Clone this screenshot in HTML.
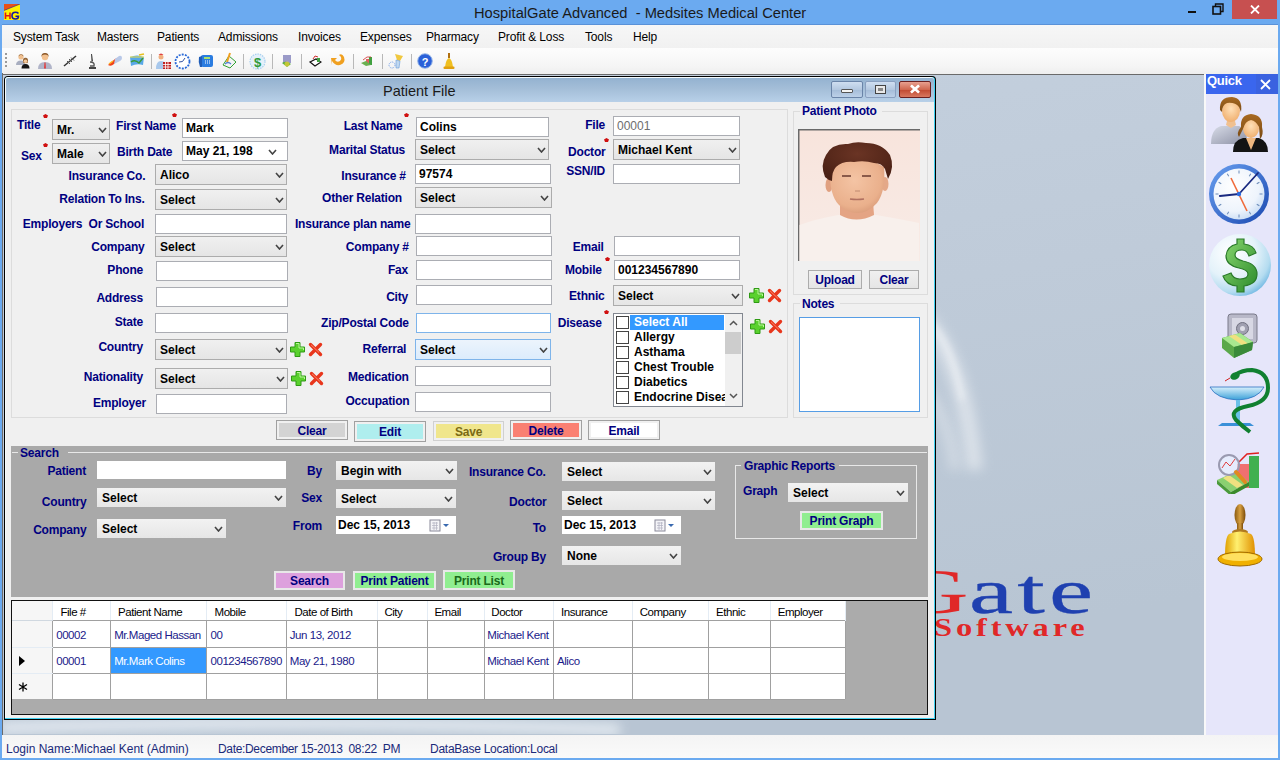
<!DOCTYPE html><html><head><meta charset="utf-8"><style>
html,body{margin:0;padding:0;}body{width:1280px;height:760px;position:relative;overflow:hidden;background:#6baaf0;font-family:"Liberation Sans",sans-serif;}
div,svg{position:absolute;}
</style></head><body>
<svg style="left:4px;top:4px" width="16" height="16" viewBox="0 0 16 16"><rect width="16" height="16" fill="#fff200"/><path d="M0 0H16L0 6.5Z" fill="#e8501a"/><path d="M0 6.5L16 0" stroke="#1a1aa0" stroke-width="0.6"/><path d="M1.5 8.5v6.5M1.5 11.8h4.5M6 8.5v6.5" stroke="#e01818" stroke-width="1.6" fill="none"/><path d="M14.5 9.5 Q13.5 8.3 11.5 8.3 Q8 8.3 8 11.7 Q8 15 11.5 15 Q14.5 15 14.5 12.3 h-3" stroke="#1818a0" stroke-width="1.6" fill="none"/></svg>
<div style="position:absolute;left:474px;top:3.76px;line-height:18px;font-size:14.7px;font-weight:normal;color:#1a1a1a;white-space:pre;">HospitalGate Advanced  - Medsites Medical Center</div>
<div style="position:absolute;left:1188px;top:11px;width:8px;height:2px;background:#111;"></div>
<svg style="left:1212px;top:3px" width="12" height="12" viewBox="0 0 12 12"><rect x="1" y="3.5" width="7.5" height="7.5" fill="none" stroke="#111" stroke-width="1.6"/><path d="M3.5 3.5V1H11V8.5H8.5" fill="none" stroke="#111" stroke-width="1.4"/></svg>
<div style="position:absolute;left:1232px;top:0px;width:45px;height:19px;background:#c75050;"></div>
<svg style="left:1250px;top:5px" width="10" height="9" viewBox="0 0 10 9"><path d="M1 0.5L9 8.5M9 0.5L1 8.5" stroke="#fff" stroke-width="1.8"/></svg>
<div style="position:absolute;left:2px;top:24px;width:1276px;height:1px;background:#5a92d8;"></div>
<div style="position:absolute;left:2px;top:25px;width:1276px;height:23px;background:linear-gradient(#f7f7f7,#f1f1f1);"></div>
<div style="position:absolute;left:13px;top:29.72px;line-height:14px;font-size:12px;font-weight:normal;color:#000;white-space:pre;letter-spacing:-0.15px;">System Task</div>
<div style="position:absolute;left:97px;top:29.72px;line-height:14px;font-size:12px;font-weight:normal;color:#000;white-space:pre;letter-spacing:-0.15px;">Masters</div>
<div style="position:absolute;left:157px;top:29.72px;line-height:14px;font-size:12px;font-weight:normal;color:#000;white-space:pre;letter-spacing:-0.15px;">Patients</div>
<div style="position:absolute;left:218px;top:29.72px;line-height:14px;font-size:12px;font-weight:normal;color:#000;white-space:pre;letter-spacing:-0.15px;">Admissions</div>
<div style="position:absolute;left:298px;top:29.72px;line-height:14px;font-size:12px;font-weight:normal;color:#000;white-space:pre;letter-spacing:-0.15px;">Invoices</div>
<div style="position:absolute;left:360px;top:29.72px;line-height:14px;font-size:12px;font-weight:normal;color:#000;white-space:pre;letter-spacing:-0.15px;">Expenses</div>
<div style="position:absolute;left:426px;top:29.72px;line-height:14px;font-size:12px;font-weight:normal;color:#000;white-space:pre;letter-spacing:-0.15px;">Pharmacy</div>
<div style="position:absolute;left:498px;top:29.72px;line-height:14px;font-size:12px;font-weight:normal;color:#000;white-space:pre;letter-spacing:-0.15px;">Profit &amp; Loss</div>
<div style="position:absolute;left:585px;top:29.72px;line-height:14px;font-size:12px;font-weight:normal;color:#000;white-space:pre;letter-spacing:-0.15px;">Tools</div>
<div style="position:absolute;left:633px;top:29.72px;line-height:14px;font-size:12px;font-weight:normal;color:#000;white-space:pre;letter-spacing:-0.15px;">Help</div>
<div style="position:absolute;left:2px;top:48px;width:1276px;height:26px;background:linear-gradient(#fdfdfd,#f5f5f5 70%,#eeeeee);"></div>
<div style="position:absolute;left:5px;top:53px;width:2px;height:2px;background:#9a9a9a;"></div>
<div style="position:absolute;left:5px;top:57px;width:2px;height:2px;background:#9a9a9a;"></div>
<div style="position:absolute;left:5px;top:61px;width:2px;height:2px;background:#9a9a9a;"></div>
<div style="position:absolute;left:5px;top:65px;width:2px;height:2px;background:#9a9a9a;"></div>
<svg style="left:15px;top:53px" width="16" height="16" viewBox="0 0 16 16"><circle cx="6" cy="4" r="2.6" fill="#f0c090"/><path d="M3.5 3.5 Q6 0 8.5 3.5 L8 2 Q6 0.5 4 2Z" fill="#8a5a2a"/><path d="M1 12 Q1 7.5 6 7.5 Q9 7.5 10 9 L10 12Z" fill="#a8aec0"/><circle cx="10.5" cy="8" r="2.5" fill="#f0c090"/><path d="M8 8 Q8 4.5 10.5 4.8 Q13 4.5 13 8 L12.5 10 L8.5 10Z" fill="#8a5a2a" opacity="0.9"/><circle cx="10.5" cy="8.3" r="1.8" fill="#f3c89a"/><path d="M6.5 15.5 Q6.5 11 10.5 11 Q14.5 11 14.5 15.5Z" fill="#151515"/></svg>
<svg style="left:37px;top:52px" width="16" height="18" viewBox="0 0 16 18"><circle cx="8" cy="5" r="3.2" fill="#f2c08e"/><path d="M4.5 5 Q4 1 8 1 Q12 1 11.5 5 L10.5 3 Q8 2 5.5 3Z" fill="#8a5526"/><path d="M1 17 Q1 10 8 10 Q15 10 15 17Z" fill="#b0b4c8"/><path d="M7.4 10.5h1.2l0.4 6h-2z" fill="#e04040"/></svg>
<svg style="left:63px;top:55px" width="14" height="12" viewBox="0 0 14 12"><path d="M1 11 L13 1" stroke="#333" stroke-width="1.5"/><path d="M4 6 L7 9 M6 4 L9 7 M8 2.5 L11 5.5" stroke="#555" stroke-width="1"/></svg>
<svg style="left:88px;top:53px" width="9" height="17" viewBox="0 0 9 17"><path d="M3 1 L4 1 L5 8 L3.5 9Z" fill="#444"/><path d="M2 9 Q7 9 6 13 L2 13" fill="none" stroke="#555" stroke-width="1.4"/><path d="M1 15h7" stroke="#444" stroke-width="2"/></svg>
<svg style="left:106px;top:55px" width="17" height="12" viewBox="0 0 17 12"><path d="M2 10 L9 4 Q11 2.5 13 4 L8 9 Q5 12 2 10Z" fill="#f0401a"/><path d="M9 4 L13 1 Q16 0 16 3 Q16 5 14 6 L8 9Z" fill="#b8c8e8"/><path d="M3 9 L7 6" stroke="#ffb020" stroke-width="1.5"/></svg>
<svg style="left:129px;top:53px" width="16" height="16" viewBox="0 0 16 16"><path d="M1 4 Q8 1 15 4 L14 12 Q8 10 2 13Z" fill="#58a8e8"/><path d="M2 9 Q6 6 10 10 L14 5" stroke="#3a9a3a" stroke-width="1.5" fill="none"/><path d="M10 2 L15 1" stroke="#e8c020" stroke-width="1.6"/><path d="M1 4 L15 4" stroke="#f0e040" stroke-width="1"/></svg>
<div style="position:absolute;left:151px;top:54px;width:1px;height:15px;background:#b8b8b8;"></div>
<svg style="left:155px;top:52px" width="16" height="18" viewBox="0 0 16 18"><circle cx="6" cy="5" r="2.5" fill="#f0b080"/><path d="M3.5 3 Q6 0 8.5 3Z" fill="#e04040"/><path d="M1 17 Q1 9 6 9 Q9 9 10 11 L10 17Z" fill="#a8c8ec"/><rect x="8" y="10" width="8" height="7" fill="#c02020"/><path d="M8 12.5h8M8 15h8M10.5 10v7M13 10v7" stroke="#fff" stroke-width="0.8"/></svg>
<svg style="left:174px;top:53px" width="17" height="17" viewBox="0 0 17 17"><circle cx="8.5" cy="8.5" r="7" fill="#fff" stroke="#2a6ad8" stroke-width="1.8" stroke-dasharray="2 1.2"/><path d="M8.5 8.5 L5 9 M8.5 8.5 L11 5" stroke="#3050a0" stroke-width="1"/></svg>
<svg style="left:198px;top:54px" width="16" height="14" viewBox="0 0 16 14"><rect x="3" y="1" width="12" height="12" rx="2" fill="#2a7ce0"/><path d="M1 3 Q0 8 2 13 L4 13 L4 2Z" fill="#1f5db8"/><rect x="6" y="3" width="6" height="2" fill="#a8e070"/><path d="M7 7h1M9 7h1M11 7h1M7 9h1M9 9h1M11 9h1" stroke="#fff" stroke-width="1.2"/></svg>
<svg style="left:221px;top:52px" width="16" height="17" viewBox="0 0 16 17"><path d="M2 13 L8 4 L15 10 L9 16Z" fill="#f4f4f4" stroke="#30a030" stroke-width="1"/><path d="M9 1 L6 10" stroke="#f0a020" stroke-width="2"/><path d="M4 12 Q7 9 10 12" stroke="#5080d0" stroke-width="1.2" fill="none"/></svg>
<div style="position:absolute;left:243px;top:54px;width:1px;height:15px;background:#b8b8b8;"></div>
<svg style="left:249px;top:53px" width="17" height="17" viewBox="0 0 17 17"><circle cx="8.5" cy="8.5" r="7.5" fill="#e4f0fa" stroke="#a8d0f0" stroke-width="1.2" stroke-dasharray="1.5 1"/><text x="8.5" y="14" text-anchor="middle" font-family="Liberation Sans" font-weight="bold" font-size="13" fill="#2f9a3a">$</text></svg>
<div style="position:absolute;left:272px;top:54px;width:1px;height:15px;background:#b8b8b8;"></div>
<svg style="left:281px;top:54px" width="11" height="14" viewBox="0 0 11 14"><rect x="2" y="1" width="8" height="8" fill="#9a9ac8"/><path d="M1 9 Q5 6 10 10 L6 13Z" fill="#5ab040"/><circle cx="6" cy="10" r="2.5" fill="#f0d030" opacity="0.7"/></svg>
<div style="position:absolute;left:301px;top:54px;width:1px;height:15px;background:#b8b8b8;"></div>
<svg style="left:309px;top:54px" width="13" height="13" viewBox="0 0 13 13"><path d="M1 8 L7 5 L12 8 L6 12Z" fill="#fff" stroke="#111" stroke-width="1.2"/><path d="M4 5 L6 2 L9 3" stroke="#d03030" stroke-width="1" fill="none"/><rect x="8" y="4" width="3" height="4" fill="#40a040"/></svg>
<svg style="left:330px;top:53px" width="17" height="15" viewBox="0 0 17 15"><path d="M2 8 Q5 13 10 12 Q16 10 14 4 Q12 0 9 2 Q13 5 10 8 Q7 10 5 7 L7 5 L1 5 L2 12Z" fill="#f0a020"/></svg>
<div style="position:absolute;left:353px;top:54px;width:1px;height:15px;background:#b8b8b8;"></div>
<svg style="left:361px;top:55px" width="12" height="11" viewBox="0 0 12 11"><rect x="8" y="2" width="3" height="8" fill="#40a040"/><rect x="5" y="4" width="3" height="6" fill="#e06060"/><path d="M0 8 L5 6 L10 10 L5 11Z" fill="#6ab050"/><path d="M2 5 L6 2 L10 2" stroke="#d03030" stroke-width="0.8" fill="none"/></svg>
<div style="position:absolute;left:382px;top:54px;width:1px;height:15px;background:#b8b8b8;"></div>
<svg style="left:388px;top:53px" width="17" height="16" viewBox="0 0 17 16"><path d="M7 1 L15 3 L12 8 L9 7Z" fill="#f0c840"/><path d="M8 7 L12 8 L11 15 L8 15Z" fill="#c0d8f0" stroke="#6a9ad8" stroke-width="0.6"/><circle cx="4" cy="12" r="3" fill="none" stroke="#6a9ae8" stroke-width="1" stroke-dasharray="1 1"/></svg>
<div style="position:absolute;left:411px;top:54px;width:1px;height:15px;background:#b8b8b8;"></div>
<svg style="left:417px;top:53px" width="16" height="16" viewBox="0 0 16 16"><circle cx="8" cy="8" r="7.3" fill="#2a60d8" stroke="#9ab8e8" stroke-width="1"/><text x="8" y="12.5" text-anchor="middle" font-family="Liberation Sans" font-weight="bold" font-size="11" fill="#fff">?</text></svg>
<svg style="left:443px;top:52px" width="12" height="18" viewBox="0 0 12 18"><path d="M5 1h2v5h-2z" fill="#b07010"/><path d="M2 15 Q3 7 6 6 Q9 7 10 15Z" fill="#f0c020"/><rect x="0.5" y="14.5" width="11" height="2.5" rx="1" fill="#e0a010"/></svg>
<div style="position:absolute;left:2px;top:74px;width:1202px;height:2px;background:linear-gradient(#7a7a7a,#3a3a3a);"></div>
<div style="position:absolute;left:2px;top:73px;width:1px;height:662px;background:#6a6a6a;"></div>
<svg style="left:3px;top:75px" width="1201" height="660" viewBox="3 75 1201 660">
<defs><linearGradient id="mdibg" x1="0" y1="0" x2="0.3" y2="1"><stop offset="0" stop-color="#c5d1df"/><stop offset="0.5" stop-color="#bfcbd9"/><stop offset="1" stop-color="#b8c5d3"/></linearGradient>
<filter id="bl1" x="-50%" y="-50%" width="200%" height="200%"><feGaussianBlur stdDeviation="6"/></filter>
<filter id="bl2" x="-50%" y="-50%" width="200%" height="200%"><feGaussianBlur stdDeviation="3"/></filter></defs>
<rect x="3" y="75" width="1201" height="660" fill="url(#mdibg)"/>
<path d="M900 300 Q960 330 975 470" stroke="#ffffff" stroke-width="16" fill="none" opacity="0.45" filter="url(#bl1)"/><path d="M925 390 Q950 420 955 470" stroke="#ffffff" stroke-width="10" fill="none" opacity="0.35" filter="url(#bl1)"/>
<path d="M925 318 Q952 340 962 400" stroke="#ffffff" stroke-width="4" fill="none" opacity="0.55" filter="url(#bl2)"/>
<path d="M0 728 Q300 718 620 730" stroke="#eef3f8" stroke-width="12" fill="none" opacity="0.8" filter="url(#bl1)"/>
</svg>
<svg style="left:936px;top:540px" width="268" height="120" viewBox="936 540 268 120"><text x="897" y="613" font-family="Liberation Serif" font-size="64" fill="#e02828" transform="translate(897,0) scale(1.55,1) translate(-897,0)">G</text><text x="969" y="613" font-family="Liberation Serif" font-size="64" fill="#1f40b0" stroke="#1f40b0" stroke-width="0.3" transform="translate(969,0) scale(1.55,1) translate(-969,0)" textLength="80" lengthAdjust="spacing">ate</text><text x="934" y="636" font-family="Liberation Serif" font-weight="bold" font-size="25" fill="#e02828" transform="translate(934,0) scale(1.3,1) translate(-934,0)" textLength="116" lengthAdjust="spacing">Software</text></svg>
<div style="position:absolute;left:1204px;top:74px;width:2px;height:661px;background:#f8f8f8;"></div>
<div style="position:absolute;left:1206px;top:74px;width:72px;height:661px;background:#e6e6fa;"></div>
<div style="position:absolute;left:1206px;top:74px;width:72px;height:20px;background:#3a66ee;"></div>
<div style="position:absolute;left:1256px;top:74px;width:22px;height:20px;background:#3a62e0;"></div>
<div style="position:absolute;left:1207px;top:73.73px;line-height:14px;font-size:13px;font-weight:bold;color:#fff;white-space:pre;letter-spacing:-0.3px;">Quick</div>
<svg style="left:1260px;top:79px" width="11" height="11" viewBox="0 0 11 11"><path d="M1 1L10 10M10 1L1 10" stroke="#fff" stroke-width="1.8"/></svg>
<svg style="left:1209px;top:95px" width="62" height="58" viewBox="0 0 62 58"><defs><linearGradient id="shirt" x1="0" y1="0" x2="1" y2="1"><stop offset="0" stop-color="#d8dce8"/><stop offset="1" stop-color="#8c90a4"/></linearGradient>
<radialGradient id="skin" cx="0.5" cy="0.4" r="0.6"><stop offset="0" stop-color="#ffe0b8"/><stop offset="1" stop-color="#f0b070"/></radialGradient>
<linearGradient id="hair" x1="0" y1="0" x2="0" y2="1"><stop offset="0" stop-color="#a86a22"/><stop offset="1" stop-color="#7a4a14"/></linearGradient></defs>
<path d="M2 49 Q2 34 12 31 L30 31 Q38 33 38 45 L36 49Z" fill="url(#shirt)"/>
<path d="M17 30 L22 33 L27 30 L26 26 L18 26Z" fill="#f0c090"/>
<ellipse cx="22" cy="16" rx="9" ry="11" fill="url(#skin)"/>
<path d="M11 15 Q10 2 23 2 Q34 3 32 17 L30 12 Q26 7 18 8 Q13 10 13 17Z" fill="url(#hair)"/>
<path d="M24 57 Q24 45 34 43 L50 43 Q59 46 59 57Z" fill="#141414"/>
<path d="M37 43 L42 55 L47 43Z" fill="#f0b880"/>
<ellipse cx="42" cy="33" rx="8" ry="10" fill="url(#skin)"/>
<path d="M30 42 Q27 38 32 32 Q31 20 42 19 Q54 20 53 32 Q55 40 51 44 L50 32 Q47 26 42 25 Q36 26 34 34Z" fill="url(#hair)"/></svg>
<svg style="left:1207px;top:162px" width="64" height="64" viewBox="0 0 64 64"><defs><radialGradient id="cf" cx="0.4" cy="0.35" r="0.7"><stop offset="0" stop-color="#ffffff"/><stop offset="0.7" stop-color="#eef4fc"/><stop offset="1" stop-color="#c8dcf4"/></radialGradient>
<linearGradient id="cr" x1="0" y1="0" x2="1" y2="1"><stop offset="0" stop-color="#6aa0f0"/><stop offset="1" stop-color="#1a48b0"/></linearGradient></defs>
<circle cx="32" cy="32" r="30" fill="url(#cr)"/><circle cx="32" cy="32" r="25.5" fill="url(#cf)"/>
<g stroke="#6a8ab8" stroke-width="1"><path d="M32 8.5 V11.5" transform="rotate(0 32 32)"/><path d="M32 8.5 V11.5" transform="rotate(30 32 32)"/><path d="M32 8.5 V11.5" transform="rotate(60 32 32)"/><path d="M32 8.5 V11.5" transform="rotate(90 32 32)"/><path d="M32 8.5 V11.5" transform="rotate(120 32 32)"/><path d="M32 8.5 V11.5" transform="rotate(150 32 32)"/><path d="M32 8.5 V11.5" transform="rotate(180 32 32)"/><path d="M32 8.5 V11.5" transform="rotate(210 32 32)"/><path d="M32 8.5 V11.5" transform="rotate(240 32 32)"/><path d="M32 8.5 V11.5" transform="rotate(270 32 32)"/><path d="M32 8.5 V11.5" transform="rotate(300 32 32)"/><path d="M32 8.5 V11.5" transform="rotate(330 32 32)"/></g>
<path d="M32 32 L13 34" stroke="#1a2a80" stroke-width="2.2" stroke-linecap="round"/>
<path d="M32 32 L51 11" stroke="#1a2a80" stroke-width="1.8" stroke-linecap="round"/>
<path d="M24 16 L40 49" stroke="#f06a3a" stroke-width="1.6"/>
<circle cx="32" cy="32" r="2.2" fill="#2a6ae0"/></svg>
<svg style="left:1207px;top:233px" width="66" height="66" viewBox="0 0 66 66"><defs><radialGradient id="bub" cx="0.35" cy="0.3" r="0.75"><stop offset="0" stop-color="#ffffff"/><stop offset="0.55" stop-color="#e4f2fa"/><stop offset="0.85" stop-color="#b4dcf0"/><stop offset="1" stop-color="#78bce4"/></radialGradient>
<linearGradient id="dg" x1="0" y1="0" x2="1" y2="1"><stop offset="0" stop-color="#8ad870"/><stop offset="1" stop-color="#2a8a2a"/></linearGradient></defs>
<circle cx="33" cy="32" r="31" fill="url(#bub)"/>
<path d="M30 6 h7 v5 Q47 12 49 20 L42 23 Q40 17 35 17 Q28 17 28 22 Q28 26 36 28 Q50 31 50 41 Q50 51 37 53 v6 h-7 v-6 Q19 52 16 43 L24 40 Q26 46 33 46 Q41 46 41 41 Q41 37 32 35 Q19 32 19 23 Q20 13 30 11Z" fill="url(#dg)" stroke="#2a7a2a" stroke-width="1.2"/></svg>
<svg style="left:1221px;top:312px" width="38" height="48" viewBox="0 0 38 48"><rect x="7" y="2" width="29" height="29" rx="3" fill="#b8b8c8" stroke="#7a7a8a" stroke-width="1"/><rect x="11" y="6" width="21" height="21" fill="#d8d8e4"/><circle cx="21.5" cy="16.5" r="6" fill="#a0a0b0" stroke="#707080"/><circle cx="21.5" cy="16.5" r="2.5" fill="#e0e0e8"/>
<path d="M1 26 L19 21 L32 30 L31 38 L13 46 L1 36Z" fill="#5aa84a"/><path d="M1 26 L19 21 L32 30 L13 35Z" fill="#a8e890"/><path d="M8 24 L14 22.5 L27 31.5 L21 33Z" fill="#f0e080"/><path d="M13 35 L32 30 L31 38 L13 46Z" fill="#3a8a3a"/></svg>
<svg style="left:1208px;top:368px" width="64" height="66" viewBox="0 0 64 66"><defs><linearGradient id="cup" x1="0" y1="0" x2="0" y2="1"><stop offset="0" stop-color="#d8f0fc"/><stop offset="1" stop-color="#3aa0d8"/></linearGradient></defs>
<path d="M2 19 L56 19 Q50 31 30 32 Q8 31 2 19Z" fill="url(#cup)" stroke="#2a70c0" stroke-width="0.8"/>
<path d="M28 32 h4 v24 h-4z" fill="#6ac0e8"/><path d="M10 58 h36 l-4 -3 h-28z" fill="#3a90d8"/>
<path d="M27 7 Q34 2 44 2 Q60 4 60 20 Q60 34 40 38 Q20 42 28 52 Q34 58 42 64" fill="none" stroke="#108030" stroke-width="4"/>
<ellipse cx="27" cy="8" rx="5" ry="3.5" fill="#108030" transform="rotate(-25 27 8)"/><path d="M22 10 L17 13" stroke="#d02020" stroke-width="1"/></svg>
<svg style="left:1215px;top:450px" width="48" height="44" viewBox="0 0 48 44"><rect x="34" y="6" width="10" height="32" fill="#40b050"/><rect x="22" y="14" width="12" height="24" fill="#f07070"/>
<path d="M24 12 L32 4 L44 3" stroke="#e02020" stroke-width="1.5" fill="none"/>
<path d="M2 30 L20 22 L34 32 L16 42Z" fill="#8ad070"/><path d="M2 30 L2 34 L16 46 L16 42Z" fill="#4a9a3a"/><path d="M16 42 L34 32 L34 36 L16 46Z" fill="#3a8a2a"/><path d="M8 28 L14 25 L28 35 L22 38Z" fill="#f0e080"/>
<circle cx="14" cy="15" r="10" fill="rgba(230,240,255,0.6)" stroke="#9a9ab0" stroke-width="2"/><path d="M7 18 L11 12 L15 16 L20 9" stroke="#e04040" stroke-width="1" fill="none"/>
<path d="M21 22 L30 32" stroke="#e08a20" stroke-width="4" stroke-linecap="round"/></svg>
<svg style="left:1217px;top:503px" width="46" height="66" viewBox="0 0 46 66"><defs><linearGradient id="bl" x1="0" y1="0" x2="1" y2="0"><stop offset="0" stop-color="#e0a000"/><stop offset="0.4" stop-color="#fff070"/><stop offset="1" stop-color="#e09000"/></linearGradient>
<linearGradient id="hd" x1="0" y1="0" x2="1" y2="0"><stop offset="0" stop-color="#8a5a10"/><stop offset="0.5" stop-color="#d8a040"/><stop offset="1" stop-color="#7a4a08"/></linearGradient></defs>
<ellipse cx="23" cy="12" rx="5.5" ry="11" fill="url(#hd)"/><rect x="20" y="20" width="6" height="8" fill="url(#hd)"/><ellipse cx="23" cy="29" rx="8" ry="3" fill="#b07a20"/>
<path d="M8 54 Q8 34 12 31 Q23 26 34 31 Q38 34 38 54Z" fill="url(#bl)"/>
<ellipse cx="23" cy="56" rx="22" ry="7" fill="#f0b000" stroke="#a06a00" stroke-width="1"/><ellipse cx="23" cy="54" rx="18" ry="4" fill="#ffe060"/></svg>
<div style="position:absolute;left:4px;top:76px;width:932px;height:644px;background:#000;border-radius:4px 4px 0 0;"></div>
<div style="position:absolute;left:5px;top:77px;width:930px;height:642px;background:#3fd0f0;border-radius:3px 3px 0 0;"></div>
<div style="position:absolute;left:5px;top:77px;width:929px;height:641px;background:#f4fafc;border-radius:3px 3px 0 0;"></div>
<div style="position:absolute;left:6px;top:78px;width:928px;height:640px;background:#f0f0f0;border-radius:2px 2px 0 0;"></div>
<div style="position:absolute;left:6px;top:78px;width:928px;height:24px;background:linear-gradient(#94b2d0 0%,#a4bed8 45%,#b8d0e8 100%);border-radius:2px 2px 0 0;"></div>
<div style="position:absolute;left:383px;top:82.06px;line-height:18px;font-size:14.5px;font-weight:normal;color:#1a1a1a;white-space:pre;">Patient File</div>
<div style="position:absolute;left:831px;top:81px;width:32px;height:17px;background:linear-gradient(#cfdef0,#b4c8e0 50%,#a4bcd8 51%,#bcd0e8);border:1px solid #6a84a8;border-radius:2px;box-sizing:border-box;"></div>
<div style="position:absolute;left:841px;top:89px;width:12px;height:4px;background:#f4f4f4;border:1px solid #555;box-sizing:border-box;border-radius:1px;"></div>
<div style="position:absolute;left:865px;top:81px;width:31px;height:17px;background:linear-gradient(#cfdef0,#b4c8e0 50%,#a4bcd8 51%,#bcd0e8);border:1px solid #8aa0c0;border-radius:2px;box-sizing:border-box;"></div>
<div style="position:absolute;left:875px;top:85px;width:11px;height:9px;background:transparent;border:1.5px solid #444;box-shadow:inset 0 0 0 2px #e8e8e8;box-sizing:border-box;"></div>
<div style="position:absolute;left:878px;top:88px;width:5px;height:3px;background:#888;"></div>
<div style="position:absolute;left:899px;top:81px;width:32px;height:17px;background:linear-gradient(#e8a090,#d06850 50%,#c04830 51%,#d87860);border:1px solid #6a2020;border-radius:2px;box-sizing:border-box;"></div>
<svg style="left:909px;top:84px" width="12" height="10" viewBox="0 0 12 10"><path d="M2 1.5L10 8.5M10 1.5L2 8.5" stroke="#fff" stroke-width="2.6"/><path d="M2 1.5L10 8.5M10 1.5L2 8.5" stroke="#ffffff" stroke-width="1.6"/></svg>
<div style="position:absolute;left:11px;top:109px;width:777px;height:309px;border:1px solid #dcdcdc;box-sizing:border-box;"></div>
<div style="position:absolute;left:793px;top:111px;width:135px;height:184px;border:1px solid #dcdcdc;box-sizing:border-box;"></div>
<div style="position:absolute;left:793px;top:303px;width:135px;height:115px;border:1px solid #dcdcdc;box-sizing:border-box;"></div>
<div style="position:absolute;left:800px;top:104px;width:82px;height:12px;background:#f0f0f0;"></div>
<div style="position:absolute;left:802px;top:103.72px;line-height:14px;font-size:12px;font-weight:bold;color:#000080;white-space:pre;letter-spacing:-0.2px;">Patient Photo</div>
<div style="position:absolute;left:800px;top:296px;width:40px;height:12px;background:#f0f0f0;"></div>
<div style="position:absolute;left:802px;top:296.72px;line-height:14px;font-size:12px;font-weight:bold;color:#000080;white-space:pre;letter-spacing:-0.2px;">Notes</div>
<div style="position:absolute;left:17px;top:117.82px;line-height:14px;font-size:12px;font-weight:bold;color:#000080;white-space:pre;letter-spacing:-0.2px;">Title</div>
<div style="position:absolute;left:21px;top:149.42px;line-height:14px;font-size:12px;font-weight:bold;color:#000080;white-space:pre;letter-spacing:-0.2px;">Sex</div>
<div style="position:absolute;left:116px;top:119.02px;line-height:14px;font-size:12px;font-weight:bold;color:#000080;white-space:pre;letter-spacing:-0.2px;">First Name</div>
<div style="position:absolute;left:117px;top:144.82px;line-height:14px;font-size:12px;font-weight:bold;color:#000080;white-space:pre;letter-spacing:-0.2px;">Birth Date</div>
<div style="position:absolute;right:1134.7px;top:168.92px;line-height:14px;font-size:12px;font-weight:bold;color:#000080;white-space:pre;letter-spacing:-0.2px;">Insurance Co.</div>
<div style="position:absolute;right:1135.4px;top:192.12px;line-height:14px;font-size:12px;font-weight:bold;color:#000080;white-space:pre;letter-spacing:-0.2px;">Relation To Ins.</div>
<div style="position:absolute;right:1135.9px;top:216.92px;line-height:14px;font-size:12px;font-weight:bold;color:#000080;white-space:pre;letter-spacing:-0.2px;">Employers  Or School</div>
<div style="position:absolute;right:1135.5px;top:240.22px;line-height:14px;font-size:12px;font-weight:bold;color:#000080;white-space:pre;letter-spacing:-0.2px;">Company</div>
<div style="position:absolute;right:1137px;top:263.22px;line-height:14px;font-size:12px;font-weight:bold;color:#000080;white-space:pre;letter-spacing:-0.2px;">Phone</div>
<div style="position:absolute;right:1137px;top:291.22px;line-height:14px;font-size:12px;font-weight:bold;color:#000080;white-space:pre;letter-spacing:-0.2px;">Address</div>
<div style="position:absolute;right:1137px;top:315.22px;line-height:14px;font-size:12px;font-weight:bold;color:#000080;white-space:pre;letter-spacing:-0.2px;">State</div>
<div style="position:absolute;right:1137px;top:340.22px;line-height:14px;font-size:12px;font-weight:bold;color:#000080;white-space:pre;letter-spacing:-0.2px;">Country</div>
<div style="position:absolute;right:1137px;top:370.22px;line-height:14px;font-size:12px;font-weight:bold;color:#000080;white-space:pre;letter-spacing:-0.2px;">Nationality</div>
<div style="position:absolute;right:1134px;top:396.22px;line-height:14px;font-size:12px;font-weight:bold;color:#000080;white-space:pre;letter-spacing:-0.2px;">Employer</div>
<div style="position:absolute;right:877.4px;top:118.52px;line-height:14px;font-size:12px;font-weight:bold;color:#000080;white-space:pre;letter-spacing:-0.2px;">Last Name</div>
<div style="position:absolute;right:875px;top:142.92px;line-height:14px;font-size:12px;font-weight:bold;color:#000080;white-space:pre;letter-spacing:-0.2px;">Marital Status</div>
<div style="position:absolute;right:874.2px;top:168.72px;line-height:14px;font-size:12px;font-weight:bold;color:#000080;white-space:pre;letter-spacing:-0.2px;">Insurance #</div>
<div style="position:absolute;right:878px;top:190.92px;line-height:14px;font-size:12px;font-weight:bold;color:#000080;white-space:pre;letter-spacing:-0.2px;">Other Relation</div>
<div style="position:absolute;right:869.5px;top:216.92px;line-height:14px;font-size:12px;font-weight:bold;color:#000080;white-space:pre;letter-spacing:-0.2px;">Insurance plan name</div>
<div style="position:absolute;right:871.25px;top:240.22px;line-height:14px;font-size:12px;font-weight:bold;color:#000080;white-space:pre;letter-spacing:-0.2px;">Company #</div>
<div style="position:absolute;right:872px;top:263.22px;line-height:14px;font-size:12px;font-weight:bold;color:#000080;white-space:pre;letter-spacing:-0.2px;">Fax</div>
<div style="position:absolute;right:872px;top:290.22px;line-height:14px;font-size:12px;font-weight:bold;color:#000080;white-space:pre;letter-spacing:-0.2px;">City</div>
<div style="position:absolute;right:871.25px;top:316.22px;line-height:14px;font-size:12px;font-weight:bold;color:#000080;white-space:pre;letter-spacing:-0.2px;">Zip/Postal Code</div>
<div style="position:absolute;right:873.75px;top:342.22px;line-height:14px;font-size:12px;font-weight:bold;color:#000080;white-space:pre;letter-spacing:-0.2px;">Referral</div>
<div style="position:absolute;right:871.25px;top:370.22px;line-height:14px;font-size:12px;font-weight:bold;color:#000080;white-space:pre;letter-spacing:-0.2px;">Medication</div>
<div style="position:absolute;right:870.5px;top:394.22px;line-height:14px;font-size:12px;font-weight:bold;color:#000080;white-space:pre;letter-spacing:-0.2px;">Occupation</div>
<div style="position:absolute;right:675px;top:118.22px;line-height:14px;font-size:12px;font-weight:bold;color:#000080;white-space:pre;letter-spacing:-0.2px;">File</div>
<div style="position:absolute;right:674.5px;top:145.12px;line-height:14px;font-size:12px;font-weight:bold;color:#000080;white-space:pre;letter-spacing:-0.2px;">Doctor</div>
<div style="position:absolute;right:675px;top:164.22px;line-height:14px;font-size:12px;font-weight:bold;color:#000080;white-space:pre;letter-spacing:-0.2px;">SSN/ID</div>
<div style="position:absolute;right:676.25px;top:240.22px;line-height:14px;font-size:12px;font-weight:bold;color:#000080;white-space:pre;letter-spacing:-0.2px;">Email</div>
<div style="position:absolute;right:678.25px;top:263.22px;line-height:14px;font-size:12px;font-weight:bold;color:#000080;white-space:pre;letter-spacing:-0.2px;">Mobile</div>
<div style="position:absolute;right:675.5px;top:288.97px;line-height:14px;font-size:12px;font-weight:bold;color:#000080;white-space:pre;letter-spacing:-0.2px;">Ethnic</div>
<div style="position:absolute;right:678.25px;top:316.22px;line-height:14px;font-size:12px;font-weight:bold;color:#000080;white-space:pre;letter-spacing:-0.2px;">Disease</div>
<svg style="position:absolute;left:42.5px;top:113.5px" width="5" height="4"><path d="M2.5 0 L5 1.5 L4 4 L1 4 L0 1.5Z" fill="#d01010"/></svg>
<svg style="position:absolute;left:42.5px;top:142.5px" width="5" height="4"><path d="M2.5 0 L5 1.5 L4 4 L1 4 L0 1.5Z" fill="#d01010"/></svg>
<svg style="position:absolute;left:171.5px;top:112.5px" width="5" height="4"><path d="M2.5 0 L5 1.5 L4 4 L1 4 L0 1.5Z" fill="#d01010"/></svg>
<svg style="position:absolute;left:404.0px;top:112.5px" width="5" height="4"><path d="M2.5 0 L5 1.5 L4 4 L1 4 L0 1.5Z" fill="#d01010"/></svg>
<svg style="position:absolute;left:603.9px;top:137.5px" width="5" height="4"><path d="M2.5 0 L5 1.5 L4 4 L1 4 L0 1.5Z" fill="#d01010"/></svg>
<svg style="position:absolute;left:605.0px;top:256.75px" width="5" height="4"><path d="M2.5 0 L5 1.5 L4 4 L1 4 L0 1.5Z" fill="#d01010"/></svg>
<svg style="position:absolute;left:603.5px;top:310px" width="5" height="4"><path d="M2.5 0 L5 1.5 L4 4 L1 4 L0 1.5Z" fill="#d01010"/></svg>
<div style="position:absolute;left:52px;top:119px;width:58px;height:21px;background:linear-gradient(#f0f0f0,#e5e5e5);border:1px solid #acacac;box-sizing:border-box;"></div>
<div style="position:absolute;left:57px;top:122.72px;line-height:14px;font-size:12px;font-weight:bold;color:#000;white-space:pre;">Mr.</div>
<svg style="position:absolute;left:97.5px;top:127.0px" width="9" height="6"><path d="M1 1 L4.5 5 L8 1" fill="none" stroke="#444" stroke-width="1.6"/></svg>
<div style="position:absolute;left:52px;top:143px;width:58px;height:21px;background:linear-gradient(#f0f0f0,#e5e5e5);border:1px solid #acacac;box-sizing:border-box;"></div>
<div style="position:absolute;left:57px;top:146.72px;line-height:14px;font-size:12px;font-weight:bold;color:#000;white-space:pre;">Male</div>
<svg style="position:absolute;left:97.5px;top:151.0px" width="9" height="6"><path d="M1 1 L4.5 5 L8 1" fill="none" stroke="#444" stroke-width="1.6"/></svg>
<div style="position:absolute;left:182px;top:118px;width:106px;height:20px;background:#fff;border:1px solid #abadb3;box-sizing:border-box;"></div>
<div style="position:absolute;left:186px;top:121.22px;line-height:14px;font-size:12px;font-weight:bold;color:#000;white-space:pre;">Mark</div>
<div style="position:absolute;left:182px;top:141px;width:106px;height:20px;background:#fff;border:1px solid #abadb3;box-sizing:border-box;"></div>
<div style="position:absolute;left:186px;top:144.22px;line-height:14px;font-size:12px;font-weight:bold;color:#000;white-space:pre;">May 21, 198</div>
<svg style="position:absolute;left:268px;top:149px" width="9" height="6"><path d="M1 1 L4.5 5 L8 1" fill="none" stroke="#444" stroke-width="1.6"/></svg>
<div style="position:absolute;left:155px;top:164px;width:132px;height:21px;background:linear-gradient(#f0f0f0,#e5e5e5);border:1px solid #acacac;box-sizing:border-box;"></div>
<div style="position:absolute;left:160px;top:167.72px;line-height:14px;font-size:12px;font-weight:bold;color:#000;white-space:pre;">Alico</div>
<svg style="position:absolute;left:274.5px;top:172.0px" width="9" height="6"><path d="M1 1 L4.5 5 L8 1" fill="none" stroke="#444" stroke-width="1.6"/></svg>
<div style="position:absolute;left:155px;top:189px;width:132px;height:21px;background:linear-gradient(#f0f0f0,#e5e5e5);border:1px solid #acacac;box-sizing:border-box;"></div>
<div style="position:absolute;left:160px;top:192.72px;line-height:14px;font-size:12px;font-weight:bold;color:#000;white-space:pre;">Select</div>
<svg style="position:absolute;left:274.5px;top:197.0px" width="9" height="6"><path d="M1 1 L4.5 5 L8 1" fill="none" stroke="#444" stroke-width="1.6"/></svg>
<div style="position:absolute;left:155px;top:214px;width:132px;height:20px;background:#fff;border:1px solid #abadb3;box-sizing:border-box;"></div>
<div style="position:absolute;left:155px;top:236px;width:132px;height:21px;background:linear-gradient(#f0f0f0,#e5e5e5);border:1px solid #acacac;box-sizing:border-box;"></div>
<div style="position:absolute;left:160px;top:239.72px;line-height:14px;font-size:12px;font-weight:bold;color:#000;white-space:pre;">Select</div>
<svg style="position:absolute;left:274.5px;top:244.0px" width="9" height="6"><path d="M1 1 L4.5 5 L8 1" fill="none" stroke="#444" stroke-width="1.6"/></svg>
<div style="position:absolute;left:156px;top:261px;width:132px;height:20px;background:#fff;border:1px solid #abadb3;box-sizing:border-box;"></div>
<div style="position:absolute;left:156px;top:287px;width:132px;height:20px;background:#fff;border:1px solid #abadb3;box-sizing:border-box;"></div>
<div style="position:absolute;left:155px;top:313px;width:133px;height:20px;background:#fff;border:1px solid #abadb3;box-sizing:border-box;"></div>
<div style="position:absolute;left:155px;top:339px;width:132px;height:21px;background:linear-gradient(#f0f0f0,#e5e5e5);border:1px solid #acacac;box-sizing:border-box;"></div>
<div style="position:absolute;left:160px;top:342.72px;line-height:14px;font-size:12px;font-weight:bold;color:#000;white-space:pre;">Select</div>
<svg style="position:absolute;left:274.5px;top:347.0px" width="9" height="6"><path d="M1 1 L4.5 5 L8 1" fill="none" stroke="#444" stroke-width="1.6"/></svg>
<div style="position:absolute;left:155px;top:368px;width:133px;height:21px;background:linear-gradient(#f0f0f0,#e5e5e5);border:1px solid #acacac;box-sizing:border-box;"></div>
<div style="position:absolute;left:160px;top:371.72px;line-height:14px;font-size:12px;font-weight:bold;color:#000;white-space:pre;">Select</div>
<svg style="position:absolute;left:275.5px;top:376.0px" width="9" height="6"><path d="M1 1 L4.5 5 L8 1" fill="none" stroke="#444" stroke-width="1.6"/></svg>
<div style="position:absolute;left:156px;top:394px;width:131px;height:20px;background:#fff;border:1px solid #abadb3;box-sizing:border-box;"></div>
<svg style="position:absolute;left:290px;top:342px" width="15" height="15" viewBox="0 0 15 15"><path d="M5 0.5h5v4.5h4.5v5h-4.5v4.5h-5v-4.5h-4.5v-5h4.5z" fill="#5ad12e" stroke="#2f9a14" stroke-width="1"/><path d="M6 1.5h3v4.5h4.5v2" fill="none" stroke="#b8f59a" stroke-width="1"/></svg>
<svg style="position:absolute;left:308px;top:342px" width="15" height="15" viewBox="0 0 15 15"><path d="M2.5 2.5 L12.5 12.5 M12.5 2.5 L2.5 12.5" stroke="#e8361c" stroke-width="3.4" stroke-linecap="round"/><path d="M3 2.8 L11 10.5" stroke="#ff9a7a" stroke-width="0.8"/></svg>
<svg style="position:absolute;left:291px;top:371px" width="15" height="15" viewBox="0 0 15 15"><path d="M5 0.5h5v4.5h4.5v5h-4.5v4.5h-5v-4.5h-4.5v-5h4.5z" fill="#5ad12e" stroke="#2f9a14" stroke-width="1"/><path d="M6 1.5h3v4.5h4.5v2" fill="none" stroke="#b8f59a" stroke-width="1"/></svg>
<svg style="position:absolute;left:309px;top:371px" width="15" height="15" viewBox="0 0 15 15"><path d="M2.5 2.5 L12.5 12.5 M12.5 2.5 L2.5 12.5" stroke="#e8361c" stroke-width="3.4" stroke-linecap="round"/><path d="M3 2.8 L11 10.5" stroke="#ff9a7a" stroke-width="0.8"/></svg>
<div style="position:absolute;left:416px;top:117px;width:133px;height:20px;background:#fff;border:1px solid #abadb3;box-sizing:border-box;"></div>
<div style="position:absolute;left:420px;top:120.22px;line-height:14px;font-size:12px;font-weight:bold;color:#000;white-space:pre;">Colins</div>
<div style="position:absolute;left:415px;top:139px;width:134px;height:21px;background:linear-gradient(#f0f0f0,#e5e5e5);border:1px solid #acacac;box-sizing:border-box;"></div>
<div style="position:absolute;left:420px;top:142.72px;line-height:14px;font-size:12px;font-weight:bold;color:#000;white-space:pre;">Select</div>
<svg style="position:absolute;left:536.5px;top:147.0px" width="9" height="6"><path d="M1 1 L4.5 5 L8 1" fill="none" stroke="#444" stroke-width="1.6"/></svg>
<div style="position:absolute;left:415px;top:164px;width:136px;height:20px;background:#fff;border:1px solid #abadb3;box-sizing:border-box;"></div>
<div style="position:absolute;left:419px;top:167.22px;line-height:14px;font-size:12px;font-weight:bold;color:#000;white-space:pre;">97574</div>
<div style="position:absolute;left:415px;top:187px;width:137px;height:21px;background:linear-gradient(#f0f0f0,#e5e5e5);border:1px solid #acacac;box-sizing:border-box;"></div>
<div style="position:absolute;left:420px;top:190.72px;line-height:14px;font-size:12px;font-weight:bold;color:#000;white-space:pre;">Select</div>
<svg style="position:absolute;left:539.5px;top:195.0px" width="9" height="6"><path d="M1 1 L4.5 5 L8 1" fill="none" stroke="#444" stroke-width="1.6"/></svg>
<div style="position:absolute;left:415px;top:214px;width:136px;height:20px;background:#fff;border:1px solid #abadb3;box-sizing:border-box;"></div>
<div style="position:absolute;left:416px;top:236px;width:136px;height:20px;background:#fff;border:1px solid #abadb3;box-sizing:border-box;"></div>
<div style="position:absolute;left:416px;top:260px;width:136px;height:20px;background:#fff;border:1px solid #abadb3;box-sizing:border-box;"></div>
<div style="position:absolute;left:416px;top:285px;width:136px;height:20px;background:#fff;border:1px solid #abadb3;box-sizing:border-box;"></div>
<div style="position:absolute;left:416px;top:313px;width:135px;height:20px;background:#fff;border:1px solid #7eb4ea;box-sizing:border-box;"></div>
<div style="position:absolute;left:415px;top:339px;width:136px;height:21px;background:linear-gradient(#ecf4fc,#dcecfc);border:1px solid #7eb4ea;box-sizing:border-box;"></div>
<div style="position:absolute;left:420px;top:342.72px;line-height:14px;font-size:12px;font-weight:bold;color:#000;white-space:pre;">Select</div>
<svg style="position:absolute;left:538.5px;top:347.0px" width="9" height="6"><path d="M1 1 L4.5 5 L8 1" fill="none" stroke="#444" stroke-width="1.6"/></svg>
<div style="position:absolute;left:415px;top:366px;width:136px;height:20px;background:#fff;border:1px solid #abadb3;box-sizing:border-box;"></div>
<div style="position:absolute;left:415px;top:392px;width:136px;height:20px;background:#fff;border:1px solid #abadb3;box-sizing:border-box;"></div>
<div style="position:absolute;left:613px;top:116px;width:127px;height:20px;background:#fff;border:1px solid #abadb3;box-sizing:border-box;"></div>
<div style="position:absolute;left:617px;top:119.22px;line-height:14px;font-size:12px;font-weight:normal;color:#6d6d6d;white-space:pre;">00001</div>
<div style="position:absolute;left:613px;top:139px;width:127px;height:21px;background:linear-gradient(#f0f0f0,#e5e5e5);border:1px solid #acacac;box-sizing:border-box;"></div>
<div style="position:absolute;left:618px;top:142.72px;line-height:14px;font-size:12px;font-weight:bold;color:#000;white-space:pre;">Michael Kent</div>
<svg style="position:absolute;left:727.5px;top:147.0px" width="9" height="6"><path d="M1 1 L4.5 5 L8 1" fill="none" stroke="#444" stroke-width="1.6"/></svg>
<div style="position:absolute;left:613px;top:164px;width:127px;height:20px;background:#fff;border:1px solid #abadb3;box-sizing:border-box;"></div>
<div style="position:absolute;left:614px;top:236px;width:126px;height:20px;background:#fff;border:1px solid #abadb3;box-sizing:border-box;"></div>
<div style="position:absolute;left:614px;top:260px;width:126px;height:20px;background:#fff;border:1px solid #abadb3;box-sizing:border-box;"></div>
<div style="position:absolute;left:618px;top:263.22px;line-height:14px;font-size:12px;font-weight:bold;color:#000;white-space:pre;">001234567890</div>
<div style="position:absolute;left:613px;top:285px;width:130px;height:21px;background:linear-gradient(#f0f0f0,#e5e5e5);border:1px solid #acacac;box-sizing:border-box;"></div>
<div style="position:absolute;left:618px;top:288.72px;line-height:14px;font-size:12px;font-weight:bold;color:#000;white-space:pre;">Select</div>
<svg style="position:absolute;left:730.5px;top:293.0px" width="9" height="6"><path d="M1 1 L4.5 5 L8 1" fill="none" stroke="#444" stroke-width="1.6"/></svg>
<svg style="position:absolute;left:749px;top:288px" width="15" height="15" viewBox="0 0 15 15"><path d="M5 0.5h5v4.5h4.5v5h-4.5v4.5h-5v-4.5h-4.5v-5h4.5z" fill="#5ad12e" stroke="#2f9a14" stroke-width="1"/><path d="M6 1.5h3v4.5h4.5v2" fill="none" stroke="#b8f59a" stroke-width="1"/></svg>
<svg style="position:absolute;left:767px;top:288px" width="15" height="15" viewBox="0 0 15 15"><path d="M2.5 2.5 L12.5 12.5 M12.5 2.5 L2.5 12.5" stroke="#e8361c" stroke-width="3.4" stroke-linecap="round"/><path d="M3 2.8 L11 10.5" stroke="#ff9a7a" stroke-width="0.8"/></svg>
<svg style="position:absolute;left:750px;top:319px" width="15" height="15" viewBox="0 0 15 15"><path d="M5 0.5h5v4.5h4.5v5h-4.5v4.5h-5v-4.5h-4.5v-5h4.5z" fill="#5ad12e" stroke="#2f9a14" stroke-width="1"/><path d="M6 1.5h3v4.5h4.5v2" fill="none" stroke="#b8f59a" stroke-width="1"/></svg>
<svg style="position:absolute;left:768px;top:319px" width="15" height="15" viewBox="0 0 15 15"><path d="M2.5 2.5 L12.5 12.5 M12.5 2.5 L2.5 12.5" stroke="#e8361c" stroke-width="3.4" stroke-linecap="round"/><path d="M3 2.8 L11 10.5" stroke="#ff9a7a" stroke-width="0.8"/></svg>
<div style="position:absolute;left:613px;top:313px;width:130px;height:94px;background:#fff;border:1px solid #828790;box-sizing:border-box;"></div>
<div style="position:absolute;left:630px;top:315px;width:94px;height:15px;background:#3399ff;"></div>
<div style="left:614px;top:314px;width:111px;height:92px;overflow:hidden">
<div style="position:absolute;left:2px;top:2px;width:13px;height:13px;background:#fff;border:1px solid #444;box-sizing:border-box;"></div>
<div style="position:absolute;left:20px;top:1.22px;line-height:14px;font-size:12px;font-weight:bold;color:#fff;white-space:pre;">Select All</div>
<div style="position:absolute;left:2px;top:17px;width:13px;height:13px;background:#fff;border:1px solid #444;box-sizing:border-box;"></div>
<div style="position:absolute;left:20px;top:16.22px;line-height:14px;font-size:12px;font-weight:bold;color:#000;white-space:pre;">Allergy</div>
<div style="position:absolute;left:2px;top:32px;width:13px;height:13px;background:#fff;border:1px solid #444;box-sizing:border-box;"></div>
<div style="position:absolute;left:20px;top:31.22px;line-height:14px;font-size:12px;font-weight:bold;color:#000;white-space:pre;">Asthama</div>
<div style="position:absolute;left:2px;top:47px;width:13px;height:13px;background:#fff;border:1px solid #444;box-sizing:border-box;"></div>
<div style="position:absolute;left:20px;top:46.22px;line-height:14px;font-size:12px;font-weight:bold;color:#000;white-space:pre;">Chest Trouble</div>
<div style="position:absolute;left:2px;top:62px;width:13px;height:13px;background:#fff;border:1px solid #444;box-sizing:border-box;"></div>
<div style="position:absolute;left:20px;top:61.22px;line-height:14px;font-size:12px;font-weight:bold;color:#000;white-space:pre;">Diabetics</div>
<div style="position:absolute;left:2px;top:77px;width:13px;height:13px;background:#fff;border:1px solid #444;box-sizing:border-box;"></div>
<div style="position:absolute;left:20px;top:76.22px;line-height:14px;font-size:12px;font-weight:bold;color:#000;white-space:pre;">Endocrine Diseases</div>
</div>
<div style="position:absolute;left:725px;top:314px;width:17px;height:92px;background:#f0f0f0;"></div>
<div style="position:absolute;left:725px;top:332px;width:16px;height:22px;background:#cdcdcd;"></div>
<svg style="left:729px;top:320px" width="9" height="6"><path d="M1 5 L4.5 1.5 L8 5" fill="none" stroke="#555" stroke-width="1.5"/></svg>
<svg style="left:729px;top:393px" width="9" height="6"><path d="M1 1 L4.5 4.5 L8 1" fill="none" stroke="#555" stroke-width="1.5"/></svg>
<svg style="left:798px;top:129px" width="122" height="132" viewBox="0 0 122 132">
<defs><radialGradient id="fc" cx="0.45" cy="0.4" r="0.65"><stop offset="0" stop-color="#f4c4a4"/><stop offset="0.75" stop-color="#eab08c"/><stop offset="1" stop-color="#d89a78"/></radialGradient>
<radialGradient id="hr" cx="0.5" cy="0.3" r="0.7"><stop offset="0" stop-color="#6a3424"/><stop offset="1" stop-color="#4a2014"/></radialGradient>
<linearGradient id="bgp" x1="0" y1="0" x2="0" y2="1"><stop offset="0" stop-color="#f8e4dc"/><stop offset="1" stop-color="#f8ebe6"/></linearGradient></defs>
<rect width="122" height="132" fill="url(#bgp)"/>
<path d="M0 0 H122 V1.5 H1.5 V132 H0Z" fill="#6a6a6a"/>
<path d="M1.5 132 L1.5 96 Q18 90 40 86 L78 86 Q102 90 121 94 L121 132Z" fill="#f8f0ec"/>
<path d="M42 72 L42 86 Q58 95 76 86 L75 72Z" fill="#e4a484"/>
<ellipse cx="31" cy="56" rx="3.5" ry="7" fill="#e0a080"/><ellipse cx="87" cy="55" rx="3.5" ry="7" fill="#e4a888"/>
<path d="M32 40 Q31 66 41 76 Q50 84 59 84 Q70 84 79 74 Q88 62 86 38 Q72 28 50 30 Q38 32 32 40Z" fill="url(#fc)"/>
<path d="M27 48 Q22 36 28 26 Q34 14 50 15 Q58 12 68 14 Q84 14 92 26 Q97 38 90 50 L87 40 Q84 34 76 34 Q66 31 56 33 Q44 32 38 38 Q34 42 34 52 Q30 51 27 48Z" fill="url(#hr)"/>
<path d="M44 47 h9 M64 47 h9" stroke="#8a5a4a" stroke-width="1.8"/><path d="M57 62 h5" stroke="#c08a70" stroke-width="1"/><path d="M52 70 Q59 71 66 70" stroke="#b07060" stroke-width="1.4" fill="none"/>
</svg>
<div style="position:absolute;left:808px;top:270px;width:54px;height:19px;background:linear-gradient(#f0f0f0,#e5e5e5);border:1px solid #acacac;box-sizing:border-box;"></div>
<div style="position:absolute;left:808px;top:271px;width:54px;height:19px;line-height:19px;text-align:center;font-size:12px;font-weight:bold;color:#000080;letter-spacing:-0.2px;">Upload</div>
<div style="position:absolute;left:869px;top:270px;width:50px;height:19px;background:linear-gradient(#f0f0f0,#e5e5e5);border:1px solid #acacac;box-sizing:border-box;"></div>
<div style="position:absolute;left:869px;top:271px;width:50px;height:19px;line-height:19px;text-align:center;font-size:12px;font-weight:bold;color:#000080;letter-spacing:-0.2px;">Clear</div>
<div style="position:absolute;left:799px;top:317px;width:121px;height:95px;background:#fff;border:1px solid #569de5;box-sizing:border-box;"></div>
<div style="position:absolute;left:276px;top:420px;width:72px;height:20px;background:#d3d3d3;border:1px solid #a0a0a0;box-shadow:inset 0 0 0 2px #f0f0f0;box-sizing:border-box;"></div>
<div style="position:absolute;left:276px;top:421px;width:72px;height:20px;line-height:20px;text-align:center;font-size:12px;font-weight:bold;color:#000080;letter-spacing:-0.2px;">Clear</div>
<div style="position:absolute;left:354px;top:421px;width:72px;height:21px;background:#afeeee;border:1px solid #a0a0a0;box-shadow:inset 0 0 0 2px #f0f0f0;box-sizing:border-box;"></div>
<div style="position:absolute;left:354px;top:422px;width:72px;height:21px;line-height:21px;text-align:center;font-size:12px;font-weight:bold;color:#000080;letter-spacing:-0.2px;">Edit</div>
<div style="position:absolute;left:433px;top:421px;width:71px;height:20px;background:#f0e68c;border:1px solid #d0d0d0;box-shadow:inset 0 0 0 2px #f0f0f0;box-sizing:border-box;"></div>
<div style="position:absolute;left:433px;top:422px;width:71px;height:20px;line-height:20px;text-align:center;font-size:12px;font-weight:bold;color:#7a6a14;letter-spacing:-0.2px;">Save</div>
<div style="position:absolute;left:510px;top:420px;width:72px;height:20px;background:#fa8072;border:1px solid #a0a0a0;box-shadow:inset 0 0 0 2px #f0f0f0;box-sizing:border-box;"></div>
<div style="position:absolute;left:510px;top:421px;width:72px;height:20px;line-height:20px;text-align:center;font-size:12px;font-weight:bold;color:#000080;letter-spacing:-0.2px;">Delete</div>
<div style="position:absolute;left:588px;top:420px;width:72px;height:20px;background:#ffffff;border:1px solid #a0a0a0;box-shadow:inset 0 0 0 2px #f0f0f0;box-sizing:border-box;"></div>
<div style="position:absolute;left:588px;top:421px;width:72px;height:20px;line-height:20px;text-align:center;font-size:12px;font-weight:bold;color:#000080;letter-spacing:-0.2px;">Email</div>
<div style="position:absolute;left:11px;top:446px;width:917px;height:151px;background:#a9a9a9;"></div>
<div style="position:absolute;left:12px;top:452px;width:915px;height:1px;background:#e8e8e8;"></div>
<div style="position:absolute;left:18px;top:447px;width:50px;height:12px;background:#a9a9a9;"></div>
<div style="position:absolute;left:20px;top:446.22px;line-height:14px;font-size:12px;font-weight:bold;color:#000080;white-space:pre;letter-spacing:-0.2px;">Search</div>
<div style="position:absolute;right:1194px;top:463.92px;line-height:14px;font-size:12px;font-weight:bold;color:#000080;white-space:pre;letter-spacing:-0.2px;">Patient</div>
<div style="position:absolute;right:1193.6px;top:495.22px;line-height:14px;font-size:12px;font-weight:bold;color:#000080;white-space:pre;letter-spacing:-0.2px;">Country</div>
<div style="position:absolute;right:1193.6px;top:522.52px;line-height:14px;font-size:12px;font-weight:bold;color:#000080;white-space:pre;letter-spacing:-0.2px;">Company</div>
<div style="position:absolute;right:958px;top:463.52px;line-height:14px;font-size:12px;font-weight:bold;color:#000080;white-space:pre;letter-spacing:-0.2px;">By</div>
<div style="position:absolute;right:958px;top:490.62px;line-height:14px;font-size:12px;font-weight:bold;color:#000080;white-space:pre;letter-spacing:-0.2px;">Sex</div>
<div style="position:absolute;right:958px;top:519.22px;line-height:14px;font-size:12px;font-weight:bold;color:#000080;white-space:pre;letter-spacing:-0.2px;">From</div>
<div style="position:absolute;right:734.3px;top:465.12px;line-height:14px;font-size:12px;font-weight:bold;color:#000080;white-space:pre;letter-spacing:-0.2px;">Insurance Co.</div>
<div style="position:absolute;right:733.5px;top:495.02px;line-height:14px;font-size:12px;font-weight:bold;color:#000080;white-space:pre;letter-spacing:-0.2px;">Doctor</div>
<div style="position:absolute;right:734px;top:520.92px;line-height:14px;font-size:12px;font-weight:bold;color:#000080;white-space:pre;letter-spacing:-0.2px;">To</div>
<div style="position:absolute;right:734px;top:550.02px;line-height:14px;font-size:12px;font-weight:bold;color:#000080;white-space:pre;letter-spacing:-0.2px;">Group By</div>
<div style="position:absolute;left:97px;top:461px;width:189px;height:18px;background:#fff;"></div>
<div style="position:absolute;left:97px;top:488px;width:189px;height:19px;background:linear-gradient(#f2f2f2,#e6e6e6);"></div>
<div style="position:absolute;left:102px;top:490.72px;line-height:14px;font-size:12px;font-weight:bold;color:#000;white-space:pre;">Select</div>
<svg style="position:absolute;left:273.5px;top:495.0px" width="9" height="6"><path d="M1 1 L4.5 5 L8 1" fill="none" stroke="#444" stroke-width="1.6"/></svg>
<div style="position:absolute;left:97px;top:519px;width:129px;height:19px;background:linear-gradient(#f2f2f2,#e6e6e6);"></div>
<div style="position:absolute;left:102px;top:521.72px;line-height:14px;font-size:12px;font-weight:bold;color:#000;white-space:pre;">Select</div>
<svg style="position:absolute;left:213.5px;top:526.0px" width="9" height="6"><path d="M1 1 L4.5 5 L8 1" fill="none" stroke="#444" stroke-width="1.6"/></svg>
<div style="position:absolute;left:336px;top:461px;width:121px;height:19px;background:linear-gradient(#f2f2f2,#e6e6e6);"></div>
<div style="position:absolute;left:341px;top:463.72px;line-height:14px;font-size:12px;font-weight:bold;color:#000;white-space:pre;">Begin with</div>
<svg style="position:absolute;left:444.5px;top:468.0px" width="9" height="6"><path d="M1 1 L4.5 5 L8 1" fill="none" stroke="#444" stroke-width="1.6"/></svg>
<div style="position:absolute;left:336px;top:489px;width:120px;height:19px;background:linear-gradient(#f2f2f2,#e6e6e6);"></div>
<div style="position:absolute;left:341px;top:491.72px;line-height:14px;font-size:12px;font-weight:bold;color:#000;white-space:pre;">Select</div>
<svg style="position:absolute;left:443.5px;top:496.0px" width="9" height="6"><path d="M1 1 L4.5 5 L8 1" fill="none" stroke="#444" stroke-width="1.6"/></svg>
<div style="position:absolute;left:336px;top:516px;width:120px;height:18px;background:#fff;"></div>
<div style="position:absolute;left:338px;top:518.22px;line-height:14px;font-size:12px;font-weight:bold;color:#000;white-space:pre;">Dec 15, 2013</div>
<svg style="left:429px;top:519px" width="22" height="13" viewBox="0 0 22 13"><rect x="1" y="1" width="10" height="11" fill="#f4f4f8" stroke="#8a8a9a" stroke-width="1"/><path d="M3 4h6M3 6.5h6M3 9h6M5 3v8M7.5 3v8" stroke="#b0b0c0" stroke-width="0.7"/><path d="M14 5 L20 5 L17 8Z" fill="#3a6ab0"/></svg>
<div style="position:absolute;left:562px;top:462px;width:153px;height:19px;background:linear-gradient(#f2f2f2,#e6e6e6);"></div>
<div style="position:absolute;left:567px;top:464.72px;line-height:14px;font-size:12px;font-weight:bold;color:#000;white-space:pre;">Select</div>
<svg style="position:absolute;left:702.5px;top:469.0px" width="9" height="6"><path d="M1 1 L4.5 5 L8 1" fill="none" stroke="#444" stroke-width="1.6"/></svg>
<div style="position:absolute;left:562px;top:491px;width:153px;height:19px;background:linear-gradient(#f2f2f2,#e6e6e6);"></div>
<div style="position:absolute;left:567px;top:493.72px;line-height:14px;font-size:12px;font-weight:bold;color:#000;white-space:pre;">Select</div>
<svg style="position:absolute;left:702.5px;top:498.0px" width="9" height="6"><path d="M1 1 L4.5 5 L8 1" fill="none" stroke="#444" stroke-width="1.6"/></svg>
<div style="position:absolute;left:562px;top:516px;width:119px;height:18px;background:#fff;"></div>
<div style="position:absolute;left:564px;top:518.22px;line-height:14px;font-size:12px;font-weight:bold;color:#000;white-space:pre;">Dec 15, 2013</div>
<svg style="left:654px;top:519px" width="22" height="13" viewBox="0 0 22 13"><rect x="1" y="1" width="10" height="11" fill="#f4f4f8" stroke="#8a8a9a" stroke-width="1"/><path d="M3 4h6M3 6.5h6M3 9h6M5 3v8M7.5 3v8" stroke="#b0b0c0" stroke-width="0.7"/><path d="M14 5 L20 5 L17 8Z" fill="#3a6ab0"/></svg>
<div style="position:absolute;left:562px;top:546px;width:119px;height:19px;background:linear-gradient(#f2f2f2,#e6e6e6);"></div>
<div style="position:absolute;left:567px;top:548.72px;line-height:14px;font-size:12px;font-weight:bold;color:#000;white-space:pre;">None</div>
<svg style="position:absolute;left:668.5px;top:553.0px" width="9" height="6"><path d="M1 1 L4.5 5 L8 1" fill="none" stroke="#444" stroke-width="1.6"/></svg>
<div style="position:absolute;left:735px;top:465px;width:182px;height:74px;border:1px solid #e8e8e8;box-sizing:border-box;"></div>
<div style="position:absolute;left:741px;top:459px;width:98px;height:12px;background:#a9a9a9;"></div>
<div style="position:absolute;left:744px;top:459.42px;line-height:14px;font-size:12px;font-weight:bold;color:#000080;white-space:pre;letter-spacing:-0.2px;">Graphic Reports</div>
<div style="position:absolute;left:743px;top:484.12px;line-height:14px;font-size:12px;font-weight:bold;color:#000080;white-space:pre;letter-spacing:-0.2px;">Graph</div>
<div style="position:absolute;left:788px;top:483px;width:120px;height:19px;background:linear-gradient(#f2f2f2,#e6e6e6);"></div>
<div style="position:absolute;left:793px;top:485.72px;line-height:14px;font-size:12px;font-weight:bold;color:#000;white-space:pre;">Select</div>
<svg style="position:absolute;left:895.5px;top:490.0px" width="9" height="6"><path d="M1 1 L4.5 5 L8 1" fill="none" stroke="#444" stroke-width="1.6"/></svg>
<div style="position:absolute;left:800px;top:511px;width:83px;height:19px;background:#90ee90;border:2px solid #e8e8e8;box-sizing:border-box;"></div>
<div style="position:absolute;left:800px;top:512px;width:83px;height:19px;line-height:19px;text-align:center;font-size:12px;font-weight:bold;color:#000080;letter-spacing:-0.2px;">Print Graph</div>
<div style="position:absolute;left:274px;top:571px;width:71px;height:19px;background:#dda0dd;border:2px solid #e8e8e8;box-sizing:border-box;"></div>
<div style="position:absolute;left:274px;top:572px;width:71px;height:19px;line-height:19px;text-align:center;font-size:12px;font-weight:bold;color:#000080;letter-spacing:-0.2px;">Search</div>
<div style="position:absolute;left:353px;top:571px;width:83px;height:19px;background:#90ee90;border:2px solid #e8e8e8;box-sizing:border-box;"></div>
<div style="position:absolute;left:353px;top:572px;width:83px;height:19px;line-height:19px;text-align:center;font-size:12px;font-weight:bold;color:#000080;letter-spacing:-0.2px;">Print Patient</div>
<div style="position:absolute;left:443px;top:570px;width:72px;height:20px;background:#90ee90;border:2px solid #e8e8e8;box-sizing:border-box;"></div>
<div style="position:absolute;left:443px;top:571px;width:72px;height:20px;line-height:20px;text-align:center;font-size:12px;font-weight:bold;color:#1a6a1a;letter-spacing:-0.2px;">Print List</div>
<div style="position:absolute;left:11px;top:600px;width:917px;height:115px;background:#ababab;border:1px solid #111;box-sizing:border-box;"></div>
<div style="position:absolute;left:12px;top:601px;width:833px;height:20px;background:#fff;"></div>
<div style="position:absolute;left:12px;top:601px;width:41px;height:98px;background:#f6f6f6;"></div>
<div style="position:absolute;left:53px;top:621px;width:792px;height:78px;background:#fff;"></div>
<div style="position:absolute;left:111px;top:648px;width:95px;height:25px;background:#3399ff;"></div>
<div style="position:absolute;left:52px;top:621px;width:1px;height:78px;background:#a0a0a0;"></div>
<div style="position:absolute;left:52px;top:601px;width:1px;height:20px;background:#e4ecf4;"></div>
<div style="position:absolute;left:110px;top:621px;width:1px;height:78px;background:#a0a0a0;"></div>
<div style="position:absolute;left:110px;top:601px;width:1px;height:20px;background:#e4ecf4;"></div>
<div style="position:absolute;left:206px;top:621px;width:1px;height:78px;background:#a0a0a0;"></div>
<div style="position:absolute;left:206px;top:601px;width:1px;height:20px;background:#e4ecf4;"></div>
<div style="position:absolute;left:286px;top:621px;width:1px;height:78px;background:#a0a0a0;"></div>
<div style="position:absolute;left:286px;top:601px;width:1px;height:20px;background:#e4ecf4;"></div>
<div style="position:absolute;left:377px;top:621px;width:1px;height:78px;background:#a0a0a0;"></div>
<div style="position:absolute;left:377px;top:601px;width:1px;height:20px;background:#e4ecf4;"></div>
<div style="position:absolute;left:427px;top:621px;width:1px;height:78px;background:#a0a0a0;"></div>
<div style="position:absolute;left:427px;top:601px;width:1px;height:20px;background:#e4ecf4;"></div>
<div style="position:absolute;left:484px;top:621px;width:1px;height:78px;background:#a0a0a0;"></div>
<div style="position:absolute;left:484px;top:601px;width:1px;height:20px;background:#e4ecf4;"></div>
<div style="position:absolute;left:553px;top:621px;width:1px;height:78px;background:#a0a0a0;"></div>
<div style="position:absolute;left:553px;top:601px;width:1px;height:20px;background:#e4ecf4;"></div>
<div style="position:absolute;left:632px;top:621px;width:1px;height:78px;background:#a0a0a0;"></div>
<div style="position:absolute;left:632px;top:601px;width:1px;height:20px;background:#e4ecf4;"></div>
<div style="position:absolute;left:708px;top:621px;width:1px;height:78px;background:#a0a0a0;"></div>
<div style="position:absolute;left:708px;top:601px;width:1px;height:20px;background:#e4ecf4;"></div>
<div style="position:absolute;left:770px;top:621px;width:1px;height:78px;background:#a0a0a0;"></div>
<div style="position:absolute;left:770px;top:601px;width:1px;height:20px;background:#e4ecf4;"></div>
<div style="position:absolute;left:845px;top:621px;width:1px;height:78px;background:#a0a0a0;"></div>
<div style="position:absolute;left:845px;top:601px;width:1px;height:20px;background:#e4ecf4;"></div>
<div style="position:absolute;left:53px;top:647px;width:792px;height:1px;background:#a0a0a0;"></div>
<div style="position:absolute;left:53px;top:673px;width:792px;height:1px;background:#a0a0a0;"></div>
<div style="position:absolute;left:53px;top:699px;width:792px;height:1px;background:#a0a0a0;"></div>
<div style="position:absolute;left:53px;top:620px;width:792px;height:1px;background:#a0a0a0;"></div>
<div style="position:absolute;left:12px;top:647px;width:41px;height:1px;background:#e4ecf4;"></div>
<div style="position:absolute;left:12px;top:673px;width:41px;height:1px;background:#e4ecf4;"></div>
<div style="position:absolute;left:12px;top:620px;width:41px;height:1px;background:#d0d8e0;"></div>
<div style="position:absolute;left:60.4px;top:605.21px;line-height:14px;font-size:11.5px;font-weight:normal;color:#000;white-space:pre;letter-spacing:-0.45px;">File #</div>
<div style="position:absolute;left:118px;top:605.21px;line-height:14px;font-size:11.5px;font-weight:normal;color:#000;white-space:pre;letter-spacing:-0.45px;">Patient Name</div>
<div style="position:absolute;left:214.5px;top:605.21px;line-height:14px;font-size:11.5px;font-weight:normal;color:#000;white-space:pre;letter-spacing:-0.45px;">Mobile</div>
<div style="position:absolute;left:294.4px;top:605.21px;line-height:14px;font-size:11.5px;font-weight:normal;color:#000;white-space:pre;letter-spacing:-0.45px;">Date of Birth</div>
<div style="position:absolute;left:384.4px;top:605.21px;line-height:14px;font-size:11.5px;font-weight:normal;color:#000;white-space:pre;letter-spacing:-0.45px;">City</div>
<div style="position:absolute;left:434.4px;top:605.21px;line-height:14px;font-size:11.5px;font-weight:normal;color:#000;white-space:pre;letter-spacing:-0.45px;">Email</div>
<div style="position:absolute;left:491.3px;top:605.21px;line-height:14px;font-size:11.5px;font-weight:normal;color:#000;white-space:pre;letter-spacing:-0.45px;">Doctor</div>
<div style="position:absolute;left:561px;top:605.21px;line-height:14px;font-size:11.5px;font-weight:normal;color:#000;white-space:pre;letter-spacing:-0.45px;">Insurance</div>
<div style="position:absolute;left:639.7px;top:605.21px;line-height:14px;font-size:11.5px;font-weight:normal;color:#000;white-space:pre;letter-spacing:-0.45px;">Company</div>
<div style="position:absolute;left:716px;top:605.21px;line-height:14px;font-size:11.5px;font-weight:normal;color:#000;white-space:pre;letter-spacing:-0.45px;">Ethnic</div>
<div style="position:absolute;left:777.7px;top:605.21px;line-height:14px;font-size:11.5px;font-weight:normal;color:#000;white-space:pre;letter-spacing:-0.45px;">Employer</div>
<div style="position:absolute;left:56.2px;top:627.81px;line-height:14px;font-size:11.5px;font-weight:normal;color:#1a1a8a;white-space:pre;letter-spacing:-0.45px;">00002</div>
<div style="position:absolute;left:114.2px;top:627.81px;line-height:14px;font-size:11.5px;font-weight:normal;color:#1a1a8a;white-space:pre;letter-spacing:-0.45px;">Mr.Maged Hassan</div>
<div style="position:absolute;left:210.5px;top:627.81px;line-height:14px;font-size:11.5px;font-weight:normal;color:#1a1a8a;white-space:pre;letter-spacing:-0.45px;">00</div>
<div style="position:absolute;left:289.8px;top:627.81px;line-height:14px;font-size:11.5px;font-weight:normal;color:#1a1a8a;white-space:pre;letter-spacing:-0.45px;">Jun 13, 2012</div>
<div style="position:absolute;left:487.3px;top:627.81px;line-height:14px;font-size:11.5px;font-weight:normal;color:#1a1a8a;white-space:pre;letter-spacing:-0.45px;">Michael Kent</div>
<div style="position:absolute;left:56.2px;top:654.21px;line-height:14px;font-size:11.5px;font-weight:normal;color:#1a1a8a;white-space:pre;letter-spacing:-0.45px;">00001</div>
<div style="position:absolute;left:114.2px;top:654.21px;line-height:14px;font-size:11.5px;font-weight:normal;color:#fff;white-space:pre;letter-spacing:-0.45px;">Mr.Mark Colins</div>
<div style="position:absolute;left:210.5px;top:654.21px;line-height:14px;font-size:11.5px;font-weight:normal;color:#1a1a8a;white-space:pre;letter-spacing:-0.45px;">001234567890</div>
<div style="position:absolute;left:289.8px;top:654.21px;line-height:14px;font-size:11.5px;font-weight:normal;color:#1a1a8a;white-space:pre;letter-spacing:-0.45px;">May 21, 1980</div>
<div style="position:absolute;left:487.3px;top:654.21px;line-height:14px;font-size:11.5px;font-weight:normal;color:#1a1a8a;white-space:pre;letter-spacing:-0.45px;">Michael Kent</div>
<div style="position:absolute;left:557px;top:654.21px;line-height:14px;font-size:11.5px;font-weight:normal;color:#1a1a8a;white-space:pre;letter-spacing:-0.45px;">Alico</div>
<svg style="left:19px;top:656px" width="6" height="10" viewBox="0 0 6 10"><path d="M0 0 L6 5 L0 10Z" fill="#000"/></svg>
<svg style="left:18px;top:682px" width="10" height="10" viewBox="0 0 10 10"><path d="M5 0.5V9.5M1 2.5L9 7.5M9 2.5L1 7.5" stroke="#000" stroke-width="1.3"/></svg>
<div style="position:absolute;left:2px;top:735px;width:1276px;height:23px;background:linear-gradient(#f4f4f4,#fafafa);"></div>
<div style="position:absolute;left:6px;top:741.72px;line-height:14px;font-size:12px;font-weight:normal;color:#1a2a7a;white-space:pre;">Login Name:Michael Kent (Admin)</div>
<div style="position:absolute;left:218px;top:741.72px;line-height:14px;font-size:12px;font-weight:normal;color:#1a2a7a;white-space:pre;letter-spacing:-0.33px;">Date:December 15-2013  08:22  PM</div>
<div style="position:absolute;left:430px;top:741.72px;line-height:14px;font-size:12px;font-weight:normal;color:#1a2a7a;white-space:pre;letter-spacing:-0.26px;">DataBase Location:Local</div>
</body></html>
